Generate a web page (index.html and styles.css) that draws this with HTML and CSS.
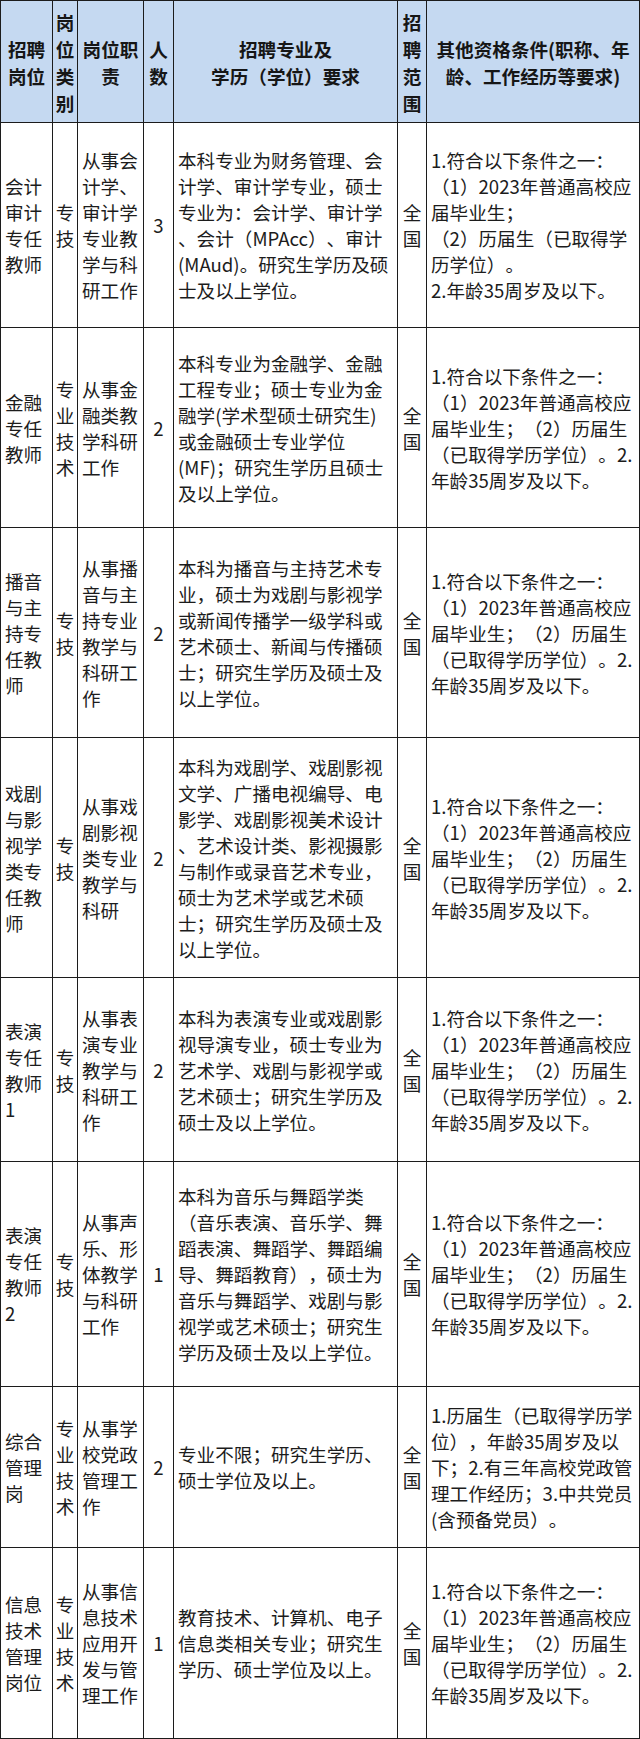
FILE: index.html
```html
<!DOCTYPE html>
<html lang="zh-CN">
<head>
<meta charset="utf-8">
<title>招聘岗位表</title>
<link rel="stylesheet" href="styles.css">
</head>
<body>
<table class="grid">
  <colgroup>
    <col class="w-name">
    <col class="w-type">
    <col class="w-duty">
    <col class="w-num">
    <col class="w-req">
    <col class="w-scope">
    <col class="w-cond">
  </colgroup>
  <thead>
    <tr class="rh">
      <th>招聘<br>岗位</th>
      <th>岗<br>位<br>类<br>别</th>
      <th>岗位职<br>责</th>
      <th>人<br>数</th>
      <th>招聘专业及<br>学历（学位）要求</th>
      <th>招<br>聘<br>范<br>围</th>
      <th>其他资格条件(职称、年<br>龄、工作经历等要求)</th>
    </tr>
  </thead>
  <tbody>
    <tr class="r1">
      <td class="name">会计<br>审计<br>专任<br>教师</td>
      <td class="type">专<br>技</td>
      <td class="duty">从事会<br>计学、<br>审计学<br>专业教<br>学与科<br>研工作</td>
      <td class="num">3</td>
      <td class="req">本科专业为财务管理、会<br>计学、审计学专业，硕士<br>专业为：会计学、审计学<br>、会计（MPAcc）、审计<br>(MAud)。研究生学历及硕<br>士及以上学位。</td>
      <td class="scope">全<br>国</td>
      <td class="cond">1.符合以下条件之一：<br>（1）2023年普通高校应<br>届毕业生；<br>（2）历届生（已取得学<br>历学位）。<br>2.年龄35周岁及以下。</td>
    </tr>
    <tr class="r2">
      <td class="name">金融<br>专任<br>教师</td>
      <td class="type">专<br>业<br>技<br>术</td>
      <td class="duty">从事金<br>融类教<br>学科研<br>工作</td>
      <td class="num">2</td>
      <td class="req">本科专业为金融学、金融<br>工程专业；硕士专业为金<br>融学(学术型硕士研究生)<br>或金融硕士专业学位<br>(MF)；研究生学历且硕士<br>及以上学位。</td>
      <td class="scope">全<br>国</td>
      <td class="cond">1.符合以下条件之一：<br>（1）2023年普通高校应<br>届毕业生；（2）历届生<br>（已取得学历学位）。2.<br>年龄35周岁及以下。</td>
    </tr>
    <tr class="r3">
      <td class="name">播音<br>与主<br>持专<br>任教<br>师</td>
      <td class="type">专<br>技</td>
      <td class="duty">从事播<br>音与主<br>持专业<br>教学与<br>科研工<br>作</td>
      <td class="num">2</td>
      <td class="req">本科为播音与主持艺术专<br>业，硕士为戏剧与影视学<br>或新闻传播学一级学科或<br>艺术硕士、新闻与传播硕<br>士；研究生学历及硕士及<br>以上学位。</td>
      <td class="scope">全<br>国</td>
      <td class="cond">1.符合以下条件之一：<br>（1）2023年普通高校应<br>届毕业生；（2）历届生<br>（已取得学历学位）。2.<br>年龄35周岁及以下。</td>
    </tr>
    <tr class="r4">
      <td class="name">戏剧<br>与影<br>视学<br>类专<br>任教<br>师</td>
      <td class="type">专<br>技</td>
      <td class="duty">从事戏<br>剧影视<br>类专业<br>教学与<br>科研</td>
      <td class="num">2</td>
      <td class="req">本科为戏剧学、戏剧影视<br>文学、广播电视编导、电<br>影学、戏剧影视美术设计<br>、艺术设计类、影视摄影<br>与制作或录音艺术专业，<br>硕士为艺术学或艺术硕<br>士；研究生学历及硕士及<br>以上学位。</td>
      <td class="scope">全<br>国</td>
      <td class="cond">1.符合以下条件之一：<br>（1）2023年普通高校应<br>届毕业生；（2）历届生<br>（已取得学历学位）。2.<br>年龄35周岁及以下。</td>
    </tr>
    <tr class="r5">
      <td class="name">表演<br>专任<br>教师<br>1</td>
      <td class="type">专<br>技</td>
      <td class="duty">从事表<br>演专业<br>教学与<br>科研工<br>作</td>
      <td class="num">2</td>
      <td class="req">本科为表演专业或戏剧影<br>视导演专业，硕士专业为<br>艺术学、戏剧与影视学或<br>艺术硕士；研究生学历及<br>硕士及以上学位。</td>
      <td class="scope">全<br>国</td>
      <td class="cond">1.符合以下条件之一：<br>（1）2023年普通高校应<br>届毕业生；（2）历届生<br>（已取得学历学位）。2.<br>年龄35周岁及以下。</td>
    </tr>
    <tr class="r6">
      <td class="name">表演<br>专任<br>教师<br>2</td>
      <td class="type">专<br>技</td>
      <td class="duty">从事声<br>乐、形<br>体教学<br>与科研<br>工作</td>
      <td class="num">1</td>
      <td class="req">本科为音乐与舞蹈学类<br>（音乐表演、音乐学、舞<br>蹈表演、舞蹈学、舞蹈编<br>导、舞蹈教育），硕士为<br>音乐与舞蹈学、戏剧与影<br>视学或艺术硕士；研究生<br>学历及硕士及以上学位。</td>
      <td class="scope">全<br>国</td>
      <td class="cond">1.符合以下条件之一：<br>（1）2023年普通高校应<br>届毕业生；（2）历届生<br>（已取得学历学位）。2.<br>年龄35周岁及以下。</td>
    </tr>
    <tr class="r7">
      <td class="name">综合<br>管理<br>岗</td>
      <td class="type">专<br>业<br>技<br>术</td>
      <td class="duty">从事学<br>校党政<br>管理工<br>作</td>
      <td class="num">2</td>
      <td class="req">专业不限；研究生学历、<br>硕士学位及以上。</td>
      <td class="scope">全<br>国</td>
      <td class="cond">1.历届生（已取得学历学<br>位），年龄35周岁及以<br>下；2.有三年高校党政管<br>理工作经历；3.中共党员<br>(含预备党员）。</td>
    </tr>
    <tr class="r8">
      <td class="name">信息<br>技术<br>管理<br>岗位</td>
      <td class="type">专<br>业<br>技<br>术</td>
      <td class="duty">从事信<br>息技术<br>应用开<br>发与管<br>理工作</td>
      <td class="num">1</td>
      <td class="req">教育技术、计算机、电子<br>信息类相关专业；研究生<br>学历、硕士学位及以上。</td>
      <td class="scope">全<br>国</td>
      <td class="cond">1.符合以下条件之一：<br>（1）2023年普通高校应<br>届毕业生；（2）历届生<br>（已取得学历学位）。2.<br>年龄35周岁及以下。</td>
    </tr>
  </tbody>
</table>
</body>
</html>
```

FILE: styles.css
```css
html, body {
  margin: 0;
  padding: 0;
  background: #ffffff;
}

body {
  width: 640px;
}

.grid {
  border-collapse: collapse;
  table-layout: fixed;
  width: 639px;
  font-family: "Noto Sans CJK SC", "Microsoft YaHei", sans-serif;
  font-size: 18.6px;
  line-height: 26px;
  color: #1c1c1c;
  text-spacing-trim: space-all;
}

.grid th,
.grid td {
  border: 1px solid #1c1c1c;
  padding: 0 4px;
  vertical-align: middle;
  white-space: nowrap;
  overflow: hidden;
}

.grid th {
  background: #c5d9f1;
  font-weight: 700;
  line-height: 27px;
  text-align: center;
  color: #161616;
  padding: 0;
}

.w-name { width: 52px; }
.w-type { width: 25px; }
.w-duty { width: 66px; }
.w-num { width: 30px; }
.w-req { width: 224px; }
.w-scope { width: 29px; }
.w-cond { width: 213px; }

.name,
.duty,
.req,
.cond {
  text-align: left;
}

.grid .type,
.grid .num,
.grid .scope {
  text-align: center;
  padding: 0;
}

.rh { height: 122px; }
.r1 { height: 205px; }
.r2 { height: 200px; }
.r3 { height: 210px; }
.r4 { height: 240px; }
.r5 { height: 184px; }
.r6 { height: 225px; }
.r7 { height: 161px; }
.r8 { height: 191px; }
```
